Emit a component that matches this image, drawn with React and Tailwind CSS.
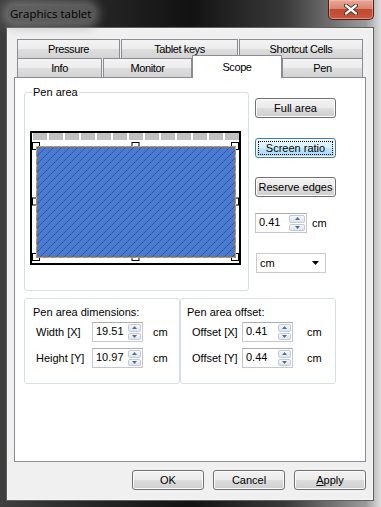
import clsx from 'clsx';

const tabFill =
  'bg-[linear-gradient(#f3f3f3_0%,#ececec_50%,#dedede_50%,#d3d3d3_100%)]';

function Tab({ label, w, gap }) {
  return (
    <div
      className={clsx(
        'flex h-[19px] items-center justify-center border border-b-0 border-[#898c95] tracking-[-0.4px]',
        tabFill,
        w,
        gap && 'mr-[1px]'
      )}
    >
      {label}
    </div>
  );
}

function Btn({ children, focused, className }) {
  return (
    <div
      className={clsx(
        'relative flex h-[20px] items-center justify-center rounded-[3px] border shadow-[inset_0_0_0_1px_#fbfbfb]',
        focused
          ? 'border-[#3c7fb1] bg-[linear-gradient(#eaf6fd_0%,#d9f0fc_50%,#bee6fd_50%,#a7d9f5_100%)]'
          : 'border-[#707070] bg-[linear-gradient(#f2f2f2_0%,#ebebeb_50%,#dddddd_50%,#cfcfcf_100%)]',
        className
      )}
    >
      {focused && <span className="absolute inset-[2px] border border-dotted border-black" />}
      {children}
    </div>
  );
}

function Arrow({ up }) {
  return (
    <svg width="5" height="3" viewBox="0 0 5 3">
      <path d={up ? 'M0 3 L2.5 0 L5 3 Z' : 'M0 0 L5 0 L2.5 3 Z'} fill="#4b6ea6" />
    </svg>
  );
}

function Spin({ value, w, spinW }) {
  return (
    <div className={clsx('flex h-[20px] border border-[#c3c8d0] border-t-[#abadb3] bg-white p-[1px]', w)}>
      <div className="flex-1 pl-[2px] leading-[15px]">{value}</div>
      <div className={clsx('flex flex-col gap-px', spinW)}>
        <div className="flex flex-1 items-center justify-center rounded-[2px] border border-[#c5cad2] bg-[linear-gradient(#f6f8fa,#dfe5ec)]">
          <Arrow up />
        </div>
        <div className="flex flex-1 items-center justify-center rounded-[2px] border border-[#c5cad2] bg-[linear-gradient(#f6f8fa,#dfe5ec)]">
          <Arrow />
        </div>
      </div>
    </div>
  );
}

function Row({ label, labelW, value, spinW, cmGap, top }) {
  return (
    <div className={clsx('flex items-center', top)}>
      <span className={labelW}>{label}</span>
      <Spin value={value} w="w-[51px]" spinW={spinW} />
      <span className={cmGap}>cm</span>
    </div>
  );
}

function Preview() {
  const cells = Array.from({ length: 13 }, (_, i) => (
    <rect key={i} x={3 + i * 16} y="2" width="14" height="7" fill="#c0c0c0" />
  ));
  const pts = [
    [6, 15], [105.5, 15], [205, 15],
    [6, 70.5], [205, 70.5],
    [6, 126], [105.5, 126], [205, 126],
  ];
  return (
    <svg width="211" height="134" viewBox="0 0 211 134" className="ml-[5px] mt-[32px] block">
      <defs>
        <pattern id="hatch" width="8" height="8" patternUnits="userSpaceOnUse">
          <path d="M0 8 L8 0 M-1 1 L1 -1 M7 9 L9 7" stroke="#1c33f0" strokeWidth="1" strokeDasharray="1.5 0.8" />
        </pattern>
      </defs>
      <rect x="1" y="1" width="209" height="132" fill="white" stroke="black" strokeWidth="2" />
      {cells}
      {pts.map(([x, y], i) => (
        <rect key={i} x={x - 3.5} y={y - 3.5} width="7" height="7" fill="white" stroke="black" />
      ))}
      <rect x="6.5" y="15.5" width="199" height="111" fill="#4b7cc8" />
      <rect x="6.5" y="15.5" width="199" height="111" fill="url(#hatch)" />
      <rect x="6.5" y="15.5" width="199" height="111" fill="none" stroke="#c98a3a" />
      <rect x="6.5" y="15.5" width="199" height="111" fill="none" stroke="#ffef3a" strokeDasharray="1 7" />
    </svg>
  );
}

export default function App() {
  return (
    <div className="h-[507px] w-[381px] overflow-hidden bg-[linear-gradient(90deg,#3f3f3f_0%,#262626_25%,#121212_50%,#3a3a3a_75%,#9a9a9a_96%,#e0e0e0_100%)] font-['Liberation_Sans',Arial,sans-serif] text-[11px] text-black">
      {/* title bar */}
      <div className="flex h-[28px] items-start">
        <div className="ml-[8px] mt-[6px] rounded-[8px] bg-[#7a7a7a]/60 px-[2px] font-['Open_Sans',sans-serif] text-[11.5px] leading-[16px] shadow-[0_0_10px_6px_rgba(150,150,150,0.55)]">
          Graphics tablet
        </div>
        <div className="ml-auto mr-[7px] flex h-[20px] w-[46px] items-center justify-center rounded-b-[5px] border border-t-0 border-[#4d1f18] bg-[linear-gradient(#e9a898_0%,#d98672_45%,#c24a32_50%,#c8573b_100%)] shadow-[inset_0_0_0_1px_rgba(255,200,190,0.5)]">
          <svg width="14" height="11" viewBox="0 0 14 11">
            <path d="M2 1.5 L12 9.5 M12 1.5 L2 9.5" stroke="#3a1510" strokeWidth="4" strokeLinecap="round" />
            <path d="M2 1.5 L12 9.5 M12 1.5 L2 9.5" stroke="#ffffff" strokeWidth="2.4" strokeLinecap="round" />
          </svg>
        </div>
      </div>

      {/* client area */}
      <div className="ml-[7px] flex h-[472px] w-[366px] flex-col border border-[#f4f4f4] bg-[#f0f0f0] shadow-[0_0_0_1px_#5e5e5e]">
        <div className="ml-[6px] mt-[10px] w-[352px]">
          <div className="ml-[3px] flex">
            <Tab label="Pressure" w="w-[103px]" gap />
            <Tab label="Tablet keys" w="w-[117px]" gap />
            <Tab label="Shortcut Cells" w="w-[124px]" />
          </div>
          <div className="ml-[3px] flex h-[19px] items-end">
            <Tab label="Info" w="w-[85px]" gap />
            <Tab label="Monitor" w="w-[89px]" />
            <div className="relative z-10 mb-[-1px] flex h-[23px] w-[90px] justify-center border border-b-0 border-[#898c95] bg-white pt-[3px] tracking-[-0.4px]">
              Scope
            </div>
            <Tab label="Pen" w="w-[81px]" />
          </div>

          <div className="h-[385px] border border-[#898c95] bg-white pl-[9px] pt-[7px]">
            <div className="flex">
              <fieldset className="h-[206px] w-[225px] rounded-[3px] border border-[#d5dfe5]">
                <legend className="ml-[7px] px-[1px] leading-[14px]">Pen area</legend>
                <Preview />
              </fieldset>
              <div className="ml-[6px] flex w-[81px] flex-col pt-[13px]">
                <Btn>Full area</Btn>
                <Btn focused className="mt-[20px]">Screen ratio</Btn>
                <Btn className="mt-[19px]">Reserve edges</Btn>
                <div className="mt-[16px] flex items-center">
                  <Spin value="0.41" w="w-[52px]" spinW="w-[16px]" />
                  <span className="ml-[5px]">cm</span>
                </div>
                <div className="ml-[1px] mt-[20px] flex h-[20px] w-[70px] items-center border border-[#c7cad0] bg-white pl-[3px] pr-[6px]">
                  <span>cm</span>
                  <svg width="7" height="4" viewBox="0 0 7 4" className="ml-auto">
                    <path d="M0 0 L7 0 L3.5 4 Z" fill="black" />
                  </svg>
                </div>
              </div>
            </div>

            <div className="mt-[7px] flex">
              <div className="h-[86px] w-[156px] rounded-[3px] border border-[#d5dfe5] pl-[8px] pt-[6px]">
                <div className="leading-[14px]">Pen area dimensions:</div>
                <div className="pl-[3px]">
                  <Row label="Width [X]" labelW="w-[56px]" value="19.51" spinW="w-[13px]" cmGap="ml-[10px]" top="mt-[3px]" />
                  <Row label="Height [Y]" labelW="w-[56px]" value="10.97" spinW="w-[13px]" cmGap="ml-[10px]" top="mt-[6px]" />
                </div>
              </div>
              <div className="h-[86px] w-[156px] rounded-[3px] border border-[#d5dfe5] pl-[6px] pt-[6px]">
                <div className="leading-[14px]">Pen area offset:</div>
                <div className="pl-[5px]">
                  <Row label="Offset [X]" labelW="w-[50px]" value="0.41" spinW="w-[13px]" cmGap="ml-[14px]" top="mt-[3px]" />
                  <Row label="Offset [Y]" labelW="w-[50px]" value="0.44" spinW="w-[13px]" cmGap="ml-[14px]" top="mt-[6px]" />
                </div>
              </div>
            </div>
          </div>
        </div>

        <div className="mt-[8px] flex justify-end gap-[9px] pr-[6px]">
          <Btn className="w-[72px]">OK</Btn>
          <Btn className="w-[72px]">Cancel</Btn>
          <Btn className="w-[72px]">
            <span>
              <span className="underline">A</span>pply
            </span>
          </Btn>
        </div>
      </div>
    </div>
  );
}
